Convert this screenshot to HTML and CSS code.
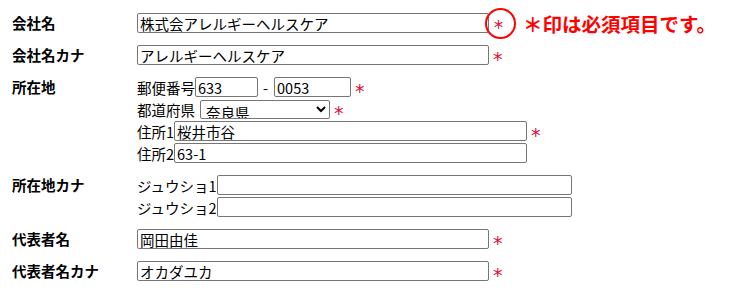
FILE: index.html
```html
<!DOCTYPE html>
<html lang="ja">
<head>
<meta charset="utf-8">
<link rel="stylesheet" href="styles.css">
</head>
<body>
<div class="form">
  <div class="row">
    <div class="label">会社名</div>
    <div class="field">
      <div class="line"><input class="w-main" type="text" value="株式会アレルギーヘルスケア"><span class="ring"><span class="req in-ring">*</span></span><span class="note">＊印は必須項目です。</span></div>
    </div>
  </div>
  <div class="row">
    <div class="label">会社名カナ</div>
    <div class="field">
      <div class="line"><input class="w-main" type="text" value="アレルギーヘルスケア"><span class="req">*</span></div>
    </div>
  </div>
  <div class="row">
    <div class="label">所在地</div>
    <div class="field">
      <div class="line">郵便番号<input class="w-zip1" type="text" value="633"><span class="dash">-</span><input class="w-zip2" type="text" value="0053"><span class="req">*</span></div>
      <div class="line">都道府県<select class="pref"><option>奈良県</option></select><span class="req">*</span></div>
      <div class="line">住所1<input class="w-addr" type="text" value="桜井市谷"><span class="req">*</span></div>
      <div class="line">住所2<input class="w-addr" type="text" value="63-1"></div>
    </div>
  </div>
  <div class="row">
    <div class="label">所在地カナ</div>
    <div class="field">
      <div class="line">ジュウショ1<input class="w-kana" type="text" value=""></div>
      <div class="line">ジュウショ2<input class="w-kana" type="text" value=""></div>
    </div>
  </div>
  <div class="row">
    <div class="label">代表者名</div>
    <div class="field">
      <div class="line"><input class="w-main" type="text" value="岡田由佳"><span class="req">*</span></div>
    </div>
  </div>
  <div class="row">
    <div class="label">代表者名カナ</div>
    <div class="field">
      <div class="line"><input class="w-main" type="text" value="オカダユカ"><span class="req">*</span></div>
    </div>
  </div>
</div>
</body>
</html>
```

FILE: styles.css
```css
body {
  margin: 8px;
  font-family: "Noto Sans CJK JP", sans-serif;
  font-size: 14.5px;
  color: #000;
  background: #fff;
}

.form {
  display: flex;
  flex-direction: column;
  gap: 12px;
  padding: 5px 0 0 4px;
}

.row {
  display: grid;
  grid-template-columns: 125px auto;
}

.label {
  font-weight: bold;
  line-height: 20px;
  white-space: nowrap;
}

.field {
  display: flex;
  flex-direction: column;
  gap: 2px;
}

.line {
  display: flex;
  align-items: center;
  height: 20px;
  white-space: nowrap;
}

input,
select {
  box-sizing: border-box;
  height: 20px;
  margin: 0;
  border: 1px solid #767676;
  border-radius: 2px;
  padding: 0 2px;
  font-family: "Noto Sans CJK JP", sans-serif;
  font-size: 14.5px;
  color: #000;
  background: #fff;
}

.w-main { width: 352px; }
.w-zip1 { width: 63px; }
.w-zip2 { width: 77px; }
.w-addr { width: 353px; }
.w-kana { width: 355px; }

.pref {
  width: 130px;
  height: 19px;
  margin-left: 5px;
  padding: 0 1px;
}

.dash {
  margin: 0 6px 0 5px;
}

.req {
  margin-left: 4px;
  color: #e0103a;
  font-family: "DejaVu Sans", sans-serif;
  font-size: 19px;
  line-height: 20px;
  height: 20px;
  padding-top: 4px;
  box-sizing: border-box;
}

.ring {
  flex: none;
  box-sizing: border-box;
  width: 31px;
  height: 31px;
  margin: -5.5px 0 -5.5px -4px;
  border: 2.5px solid #f00;
  border-radius: 50%;
  display: flex;
  align-items: center;
  justify-content: center;
  padding-right: 4px;
}

.req.in-ring {
  margin-left: 0;
}

.note {
  margin-left: 7px;
  color: #f00;
  font-size: 19.5px;
  font-weight: bold;
}
```
